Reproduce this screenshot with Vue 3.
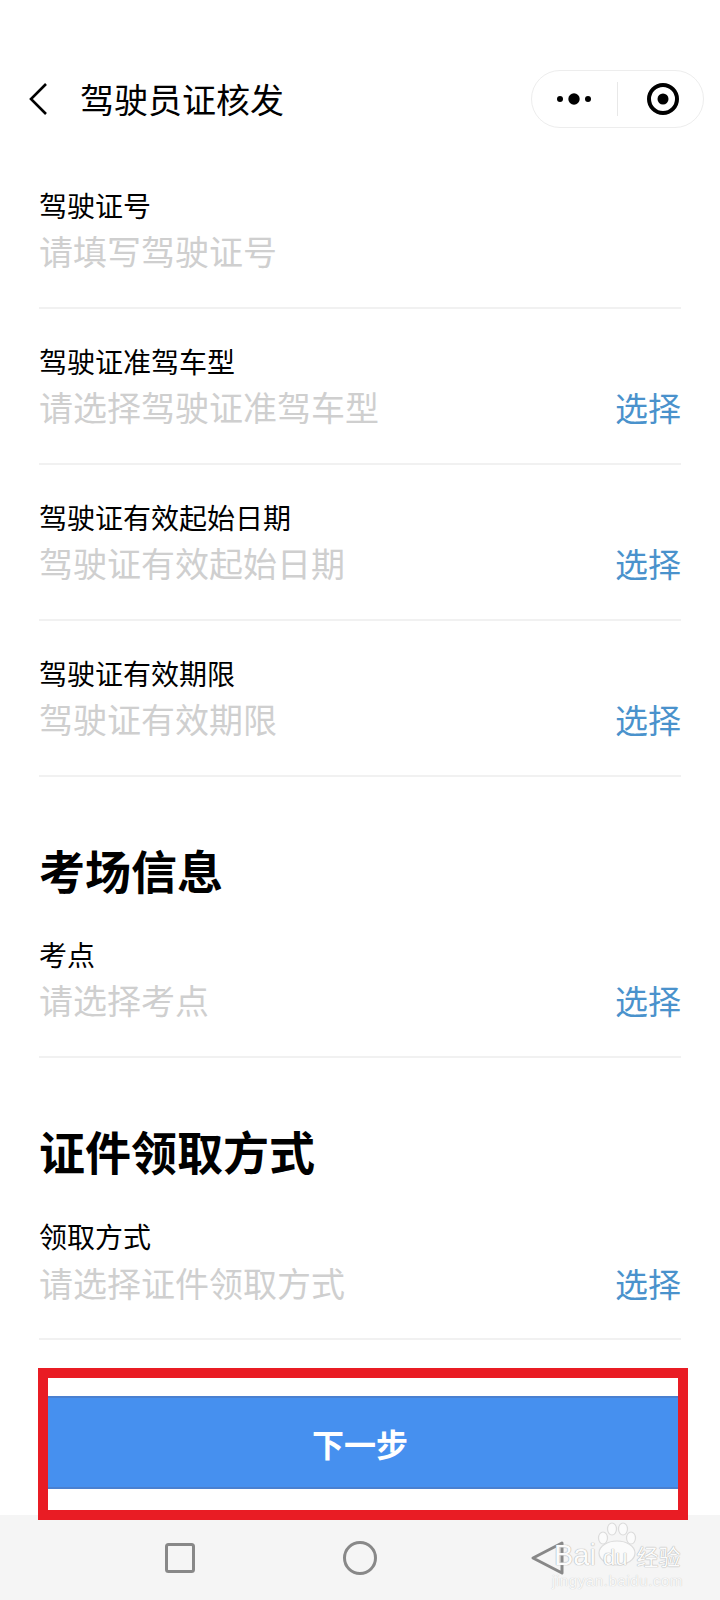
<script setup>
const top = [
  { label: '驾驶证号', hint: '请填写驾驶证号', pick: false },
  { label: '驾驶证准驾车型', hint: '请选择驾驶证准驾车型', pick: true },
  { label: '驾驶证有效起始日期', hint: '驾驶证有效起始日期', pick: true },
  { label: '驾驶证有效期限', hint: '驾驶证有效期限', pick: true },
]
</script>

<template>
  <div class="page">
    <header class="nav">
      <svg class="back" width="24" height="36" viewBox="0 0 24 36"><path d="M19 3 4 18l15 15" fill="none" stroke="#000" stroke-width="2.6"/></svg>
      <h1 class="title">驾驶员证核发</h1>
      <div class="capsule">
        <svg width="44" height="16" viewBox="0 0 44 16"><circle cx="8" cy="8" r="3" fill="#000"/><circle cx="22" cy="8" r="5.7" fill="#000"/><circle cx="36" cy="8" r="3" fill="#000"/></svg>
        <span class="sep"></span>
        <svg width="34" height="34" viewBox="0 0 34 34"><circle cx="17" cy="17" r="14" fill="none" stroke="#000" stroke-width="4"/><circle cx="17" cy="17" r="5.5" fill="#000"/></svg>
      </div>
    </header>

    <main class="form">
      <section v-for="f in top" :key="f.label" class="field">
        <div class="label">{{ f.label }}</div>
        <div class="line"><span class="hint">{{ f.hint }}</span><span v-if="f.pick" class="pick">选择</span></div>
      </section>

      <h2 class="heading">考场信息</h2>
      <section class="field short">
        <div class="label">考点</div>
        <div class="line"><span class="hint">请选择考点</span><span class="pick">选择</span></div>
      </section>

      <h2 class="heading">证件领取方式</h2>
      <section class="field short last">
        <div class="label">领取方式</div>
        <div class="line"><span class="hint">请选择证件领取方式</span><span class="pick">选择</span></div>
      </section>
    </main>

    <div class="action">
      <button class="next">下一步</button>
    </div>

    <footer class="sys">
      <svg width="32" height="32" viewBox="0 0 32 32"><rect x="2.5" y="2.5" width="27" height="27" rx="2" fill="none" stroke="#888" stroke-width="3"/></svg>
      <svg class="home" width="36" height="36" viewBox="0 0 36 36"><circle cx="18" cy="18" r="15.5" fill="none" stroke="#888" stroke-width="3"/></svg>
      <svg class="tri" width="34" height="36" viewBox="0 0 34 36"><path d="M32 3 3 18l29 15z" fill="none" stroke="#888" stroke-width="3" stroke-linejoin="round"/></svg>
    </footer>

    <div class="redbox"></div>

    <div class="mark">
      <svg class="paw" width="40" height="44" viewBox="0 0 40 44" fill="#fbfbfb" stroke="#dcdcdc" stroke-width="1.2"><ellipse cx="6" cy="16" rx="4.5" ry="6"/><ellipse cx="15" cy="7" rx="4.5" ry="6"/><ellipse cx="26" cy="7" rx="4.5" ry="6"/><ellipse cx="34" cy="16" rx="4.5" ry="6"/><ellipse cx="20" cy="31" rx="18" ry="12"/></svg>
      <div class="mark-main"><span>Bai</span><span class="du">du</span><span class="jy">经验</span></div>
      <div class="mark-sub">jingyan.baidu.com</div>
    </div>
  </div>
</template>

<style>
html, body { margin: 0; background: #fff; }
</style>

<style scoped>
.page {
  position: relative;
  width: 720px;
  height: 1600px;
  overflow: hidden;
  background: #fff;
  display: flex;
  flex-direction: column;
  font-family: "Noto Sans CJK SC", "Liberation Sans", sans-serif;
  color: #000;
}
.nav {
  height: 153px;
  box-sizing: border-box;
  padding: 70px 16px 0 27px;
  display: flex;
  align-items: flex-start;
}
.back { margin-top: 11px; }
.title {
  margin: 0 0 0 29px;
  font-size: 34px;
  font-weight: 400;
  line-height: 58px;
  flex: 1;
}
.capsule {
  width: 173px;
  height: 58px;
  box-sizing: border-box;
  border: 1px solid #ededed;
  border-radius: 29px;
  display: flex;
  align-items: center;
  padding-left: 20px;
}
.sep { width: 1px; height: 34px; background: #e8e8e8; margin: 0 28px 0 21px; }
.form { padding: 0 39px; display: flex; flex-direction: column; }
.field {
  height: 156px;
  box-sizing: border-box;
  padding-top: 32px;
  border-bottom: 2px solid #f1f1f1;
}
.label { font-size: 28px; line-height: 40px; }
.line {
  display: flex;
  justify-content: space-between;
  line-height: 50px;
  font-size: 34px;
  margin-top: 1px;
}
.hint { color: #cfcfcf; }
.pick { color: #4a92cc; font-size: 33px; }
.heading {
  margin: 62px 0 0;
  font-size: 46px;
  font-weight: 700;
  line-height: 60px;
}
.short { height: 159px; padding-top: 35px; }
.last { height: 160px; padding-top: 36px; }
.last .line { margin-top: 2px; }
.action {
  position: absolute;
  left: 48px;
  top: 1396px;
  width: 630px;
}
.next {
  display: block;
  width: 100%;
  height: 93px;
  border: 0;
  border-top: 2px solid #4a80d0;
  border-bottom: 2px solid #4a80d0;
  background: #4690ef;
  color: #fff;
  font: 700 32px "Noto Sans CJK SC", sans-serif;
  padding: 0 6px 0 0;
}
.sys {
  margin-top: auto;
  height: 85px;
  box-sizing: border-box;
  background: #f5f5f5;
  display: flex;
  align-items: center;
  padding-left: 164px;
}
.home { margin-left: 146px; }
.tri { margin-left: 152px; }
.redbox {
  position: absolute;
  left: 38px;
  top: 1368px;
  width: 650px;
  height: 152px;
  box-sizing: border-box;
  border: 10px solid #e91c24;
}
.mark {
  position: absolute;
  left: 554px;
  top: 1522px;
  width: 130px;
  color: #fbfbfb;
}
.paw { position: absolute; left: 43px; top: 0; }
.mark-main {
  position: relative;
  margin-top: 16px;
  display: flex;
  align-items: baseline;
  height: 34px;
  font: 400 29px/34px "Liberation Sans", "Noto Sans CJK SC", sans-serif;
  white-space: nowrap;
  text-shadow: 0 0 1px #aaa, 0 0 1px #aaa;
}
.du { font-size: 22px; margin-left: 7px; }
.jy { font-size: 22px; margin-left: 9px; font-family: "Noto Sans CJK SC", sans-serif; }
.mark-sub {
  position: relative;
  margin-left: -2px;
  font: 400 15px/18px "Liberation Sans", sans-serif;
  color: #f9f9f9;
  text-shadow: 0 0 1px #bbb;
  white-space: nowrap;
  letter-spacing: 0.6px;
}
</style>
